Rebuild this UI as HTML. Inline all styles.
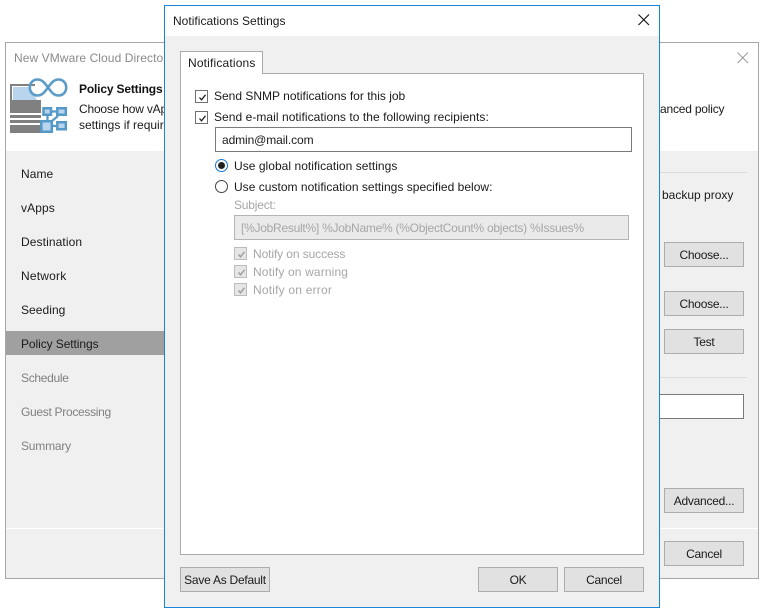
<!DOCTYPE html>
<html><head><meta charset="utf-8">
<style>
html,body{margin:0;padding:0;background:#fff;width:764px;height:613px;overflow:hidden}
body{position:relative;font-family:"Liberation Sans",sans-serif;font-size:12px;color:#1a1a1a}
.a{position:absolute;box-sizing:border-box}
.t{position:absolute;white-space:nowrap;line-height:16px;height:16px;letter-spacing:0}
.g{color:#808080}
.d{color:#a6a6a6}
.b{position:absolute;box-sizing:border-box;width:80px;height:25px;background:#e1e1e1;border:1px solid #adadad;text-align:center;line-height:24px;color:#1a1a1a;letter-spacing:-.25px;white-space:nowrap}
.c{position:absolute;box-sizing:border-box;width:13px;height:13px;border:1px solid #707070;background:#fff}
.c svg{position:absolute;left:1px;top:1px}
.c.x{border-color:#bcbcbc;background:#e6e6e6}
</style></head><body>
<!-- back window -->
<div class="a" style="left:5px;top:42px;width:754px;height:537px;background:#f0f0f0;border:1px solid #a6a6a6"></div>
<div class="a" style="left:6px;top:43px;width:752px;height:108px;background:#fff"></div>
<div class="t" style="left:14px;top:50px;color:#8a8a8a;letter-spacing:.08px">New VMware Cloud Director</div>
<svg class="a" style="left:735px;top:50px" width="16" height="16"><path d="M2.500 2.500L13 13M13 2.500L2.500 13" stroke="#9a9a9a" stroke-width="1" fill="none"/></svg>
<svg class="a" style="left:5px;top:72px" width="65" height="65">
<path d="M5 12H30V14H7V28H36V41H5z" fill="#808080"/>
<path d="M8 15H25L32 28H8z" fill="#b9d5ee"/>
<path d="M5 43H36V46H5zM5 48H36V51H5zM5 53H36V61H5z" fill="#808080"/>
<path d="M43 15.500C40 11.500 37.500 7.500 32.500 7.500C28 7.500 24.800 11 24.800 15.500C24.800 20 28 23.500 32.500 23.500C37.500 23.500 40 19.500 43 15.500C46 11.500 48.500 7.500 53.500 7.500C58 7.500 61.200 11 61.200 15.500C61.200 20 58 23.500 53.500 23.500C48.500 23.500 46 19.500 43 15.500Z" fill="none" stroke="#5b9dc8" stroke-width="2.600"/>
<path d="M42.500 44V48M47 39.500H51M48 54H51M47 49L53 44" stroke="#5499c7" stroke-width="2.200" fill="none"/>
<path d="M38.500 36.300h7.500v6.500h-7.500zM52.300 36.300h8.500v6.500h-8.500zM36.300 49.300h10.500v10.500H36.300zM52.300 50.300h8.500v7h-8.500z" fill="#b9d5ee" stroke="#5499c7" stroke-width="2.500"/>
</svg>
<div class="t" style="left:79px;top:81px;font-weight:bold;color:#111;letter-spacing:-.17px">Policy Settings</div>
<div class="t" style="left:79px;top:101px;letter-spacing:-.2px">Choose how vApps</div>
<div class="t" style="left:79px;top:117px">settings if required</div>
<div class="t" style="left:660px;top:101px;letter-spacing:-.2px">anced policy</div>
<div class="a" style="left:660px;top:172px;width:87px;height:1px;background:#dcdcdc"></div>
<div class="a" style="left:660px;top:377px;width:87px;height:1px;background:#dcdcdc"></div>
<div class="t" style="left:662px;top:187px">backup proxy</div>
<div class="b" style="left:664px;top:242px">Choose...</div>
<div class="b" style="left:664px;top:291px">Choose...</div>
<div class="b" style="left:664px;top:329px">Test</div>
<div class="a" style="left:600px;top:394px;width:144px;height:25px;background:#fff;border:1px solid #7a7a7a"></div>
<div class="b" style="left:664px;top:488px">Advanced...</div>
<div class="a" style="left:6px;top:528px;width:752px;height:1px;background:#fff"></div>
<div class="b" style="left:664px;top:541px">Cancel</div>
<div class="a" style="left:6px;top:331px;width:160px;height:24px;background:#a0a0a0"></div>
<div class="t" style="left:21px;top:166px;letter-spacing:.05px">Name</div>
<div class="t" style="left:21px;top:200px;letter-spacing:.1px">vApps</div>
<div class="t" style="left:21px;top:234px;letter-spacing:.1px">Destination</div>
<div class="t" style="left:21px;top:268px;letter-spacing:.2px">Network</div>
<div class="t" style="left:21px;top:302px;letter-spacing:.05px">Seeding</div>
<div class="t" style="left:21px;top:336px;letter-spacing:-.08px">Policy Settings</div>
<div class="t g" style="left:21px;top:370px;letter-spacing:-.3px">Schedule</div>
<div class="t g" style="left:21px;top:404px;letter-spacing:-.3px">Guest Processing</div>
<div class="t g" style="left:21px;top:438px;letter-spacing:-.2px">Summary</div>

<!-- front window -->
<div class="a" style="left:164px;top:5px;width:496px;height:603px;background:#f0f0f0;border:1px solid #1883d7"></div>
<div class="a" style="left:165px;top:6px;width:494px;height:30px;background:#fff"></div>
<div class="t" style="left:173px;top:13px;letter-spacing:.02px">Notifications Settings</div>
<svg class="a" style="left:636px;top:12px" width="16" height="16"><path d="M2.500 2.500L13 13M13 2.500L2.500 13" stroke="#111" stroke-width="1.100" fill="none"/></svg>
<div class="a" style="left:180px;top:73px;width:464px;height:482px;background:#fff;border:1px solid #acacac"></div>
<div class="a" style="left:180px;top:51px;width:83px;height:23px;background:#fff;border:1px solid #acacac;border-bottom:none"></div>
<div class="t" style="left:188px;top:55px;letter-spacing:.17px">Notifications</div>

<div class="c" style="left:195px;top:90px"><svg width="11" height="11"><path d="M2.500 5.500L4.500 7.800L8.500 2.800" stroke="#222" stroke-width="1.300" fill="none"/></svg></div>
<div class="t" style="left:214px;top:88px">Send SNMP notifications for this job</div>
<div class="c" style="left:195px;top:111px"><svg width="11" height="11"><path d="M2.500 5.500L4.500 7.800L8.500 2.800" stroke="#222" stroke-width="1.300" fill="none"/></svg></div>
<div class="t" style="left:214px;top:109px;letter-spacing:.05px">Send e-mail notifications to the following recipients:</div>
<div class="a" style="left:215px;top:127px;width:417px;height:25px;background:#fff;border:1px solid #7a7a7a"></div>
<div class="t" style="left:222px;top:132px;letter-spacing:-.1px">admin@mail.com</div>

<svg class="a" style="left:215px;top:159px" width="13" height="13"><circle cx="6.500" cy="6.500" r="6" fill="#fff" stroke="#0f78d4"/><circle cx="6.500" cy="6.500" r="3.500" fill="#222"/></svg>
<div class="t" style="left:234px;top:158px;letter-spacing:.04px">Use global notification settings</div>
<svg class="a" style="left:215px;top:180px" width="13" height="13"><circle cx="6.500" cy="6.500" r="6" fill="#fff" stroke="#444"/></svg>
<div class="t" style="left:234px;top:179px;letter-spacing:.02px">Use custom notification settings specified below:</div>
<div class="t d" style="left:234px;top:197px;letter-spacing:-.2px">Subject:</div>
<div class="a" style="left:234px;top:215px;width:395px;height:25px;background:#eaeaea;border:1px solid #b4b4b4"></div>
<div class="t d" style="left:241px;top:220px;letter-spacing:-.26px">[%JobResult%] %JobName% (%ObjectCount% objects) %Issues%</div>
<div class="c x" style="left:234px;top:247px"><svg width="11" height="11"><path d="M2.500 5.500L4.500 7.800L8.500 2.800" stroke="#a0a0a0" stroke-width="1.500" fill="none"/></svg></div>
<div class="t d" style="left:253px;top:246px;letter-spacing:-.1px">Notify on success</div>
<div class="c x" style="left:234px;top:265px"><svg width="11" height="11"><path d="M2.500 5.500L4.500 7.800L8.500 2.800" stroke="#a0a0a0" stroke-width="1.500" fill="none"/></svg></div>
<div class="t d" style="left:253px;top:264px;letter-spacing:.14px">Notify on warning</div>
<div class="c x" style="left:234px;top:283px"><svg width="11" height="11"><path d="M2.500 5.500L4.500 7.800L8.500 2.800" stroke="#a0a0a0" stroke-width="1.500" fill="none"/></svg></div>
<div class="t d" style="left:253px;top:282px;letter-spacing:.2px">Notify on error</div>

<div class="b" style="left:180px;top:567px;width:90px">Save As Default</div>
<div class="b" style="left:478px;top:567px">OK</div>
<div class="b" style="left:564px;top:567px">Cancel</div>
</body></html>
